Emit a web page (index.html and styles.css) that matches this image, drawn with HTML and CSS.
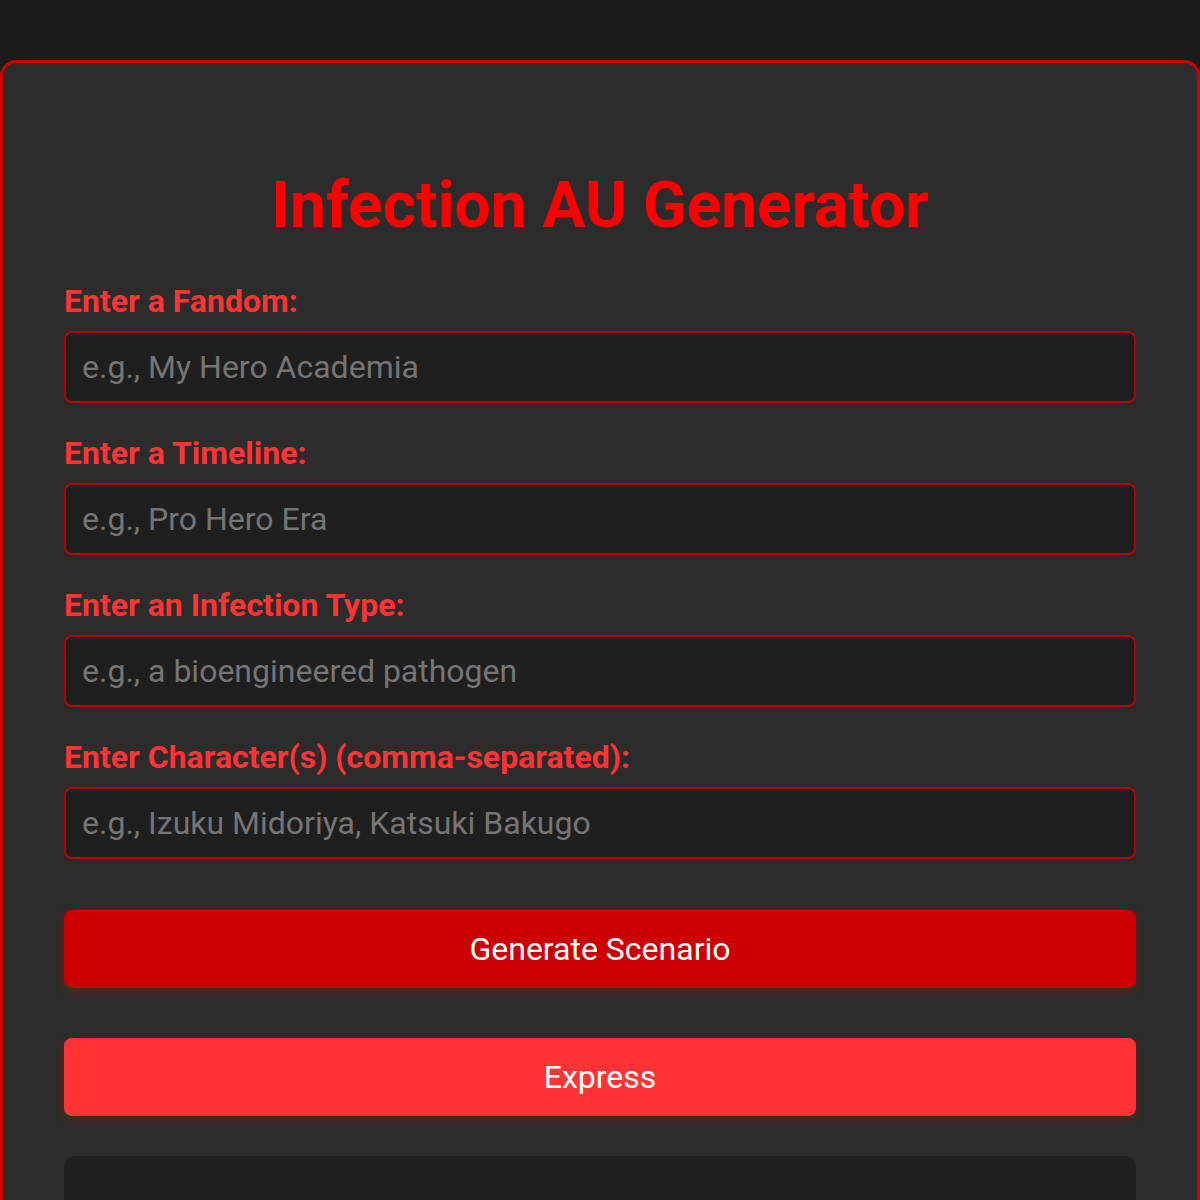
FILE: index.html
```html
<!DOCTYPE html>
<html lang="en">
<head>
    <meta charset="utf-8">
    <title>Infection AU Generator</title>
    <meta name="viewport" content="width=device-width, initial-scale=1">
    <link rel="stylesheet" href="styles.css">
</head>
<body>

<div class="container">
    <h1>Infection AU Generator</h1>

    <label for="fandom">Enter a Fandom:</label>
    <input type="text" id="fandom" placeholder="e.g., My Hero Academia">

    <label for="timeline">Enter a Timeline:</label>
    <input type="text" id="timeline" placeholder="e.g., Pro Hero Era">

    <label for="infection">Enter an Infection Type:</label>
    <input type="text" id="infection" placeholder="e.g., a bioengineered pathogen">

    <label for="characters">Enter Character(s) (comma-separated):</label>
    <input type="text" id="characters" placeholder="e.g., Izuku Midoriya, Katsuki Bakugo">

    <button id="generate" class="btn">Generate Scenario</button>
    <button id="express" class="btn btn-alt">Express</button>

    <div id="output" class="output"></div>
</div>

</body>
</html>
```

FILE: styles.css
```css
:root {
    --red: #cc0000;
    --red-light: #ff3333;
}

body {
    margin: 0;
    padding-top: 60px;
    font-family: Roboto, "Liberation Sans", sans-serif;
    background: #1a1a1a;
}

.container {
    border: 3px solid var(--red);
    border-radius: 16px;
    background: #2c2c2c;
    padding: 61px 61px 80px;
}

h1 {
    margin: 43px 0 38px;
    font-size: 64px;
    line-height: 77px;
    font-weight: bold;
    color: #ff0000;
    text-align: center;
}

label {
    display: block;
    margin-bottom: 11px;
    font-size: 32px;
    line-height: 38px;
    font-weight: bold;
    color: var(--red-light);
}

input {
    display: block;
    box-sizing: border-box;
    width: 100%;
    height: 72px;
    margin: 0 0 31px;
    padding: 0 16px;
    border: 2px solid #bb0000;
    border-radius: 8px;
    background: #1f1f1f;
    font-family: inherit;
    font-size: 32px;
    color: #ddd;
}

input::placeholder {
    color: #757575;
}

.btn {
    display: block;
    width: 100%;
    height: 78px;
    margin-top: 51px;
    border: none;
    border-radius: 8px;
    background: var(--red);
    box-shadow: 0 4px 12px rgba(204, 0, 0, 0.3);

    font-family: inherit;
    font-size: 32px;
    color: white;
}

.btn-alt {
    margin-top: 50px;
    background: var(--red-light);
}

.output {
    margin-top: 40px;
    height: 200px;
    border-radius: 12px;
    background: #202020;
}
```
